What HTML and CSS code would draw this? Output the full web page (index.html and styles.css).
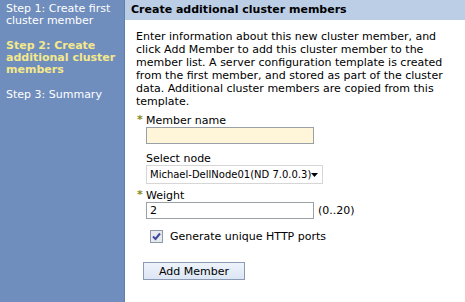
FILE: index.html
```html
<!DOCTYPE html>
<html>
<head>
<meta charset="utf-8">
<link rel="stylesheet" href="styles.css">
</head>
<body>
<div class="page">
  <nav class="steps">
    <div class="step">Step 1: Create first cluster member</div>
    <div class="step current">Step 2: Create additional cluster members</div>
    <div class="step">Step 3: Summary</div>
  </nav>
  <main class="main">
    <h1 class="title">Create additional cluster members</h1>
    <div class="content">
      <p class="intro">Enter information about this new cluster member, and click Add Member to add this cluster member to the member list. A server configuration template is created from the first member, and stored as part of the cluster data. Additional cluster members are copied from this template.</p>
      <div class="field">
        <label class="label req"><span class="star">*</span>Member name</label>
        <input class="text cream" type="text">
      </div>
      <div class="field field-select">
        <label class="label">Select node</label>
        <div class="select">
          <span class="opt">Michael-DellNode01(ND 7.0.0.3)</span>
          <svg class="arrow" width="7" height="4" viewBox="0 0 7 4"><path d="M0 0H7L3.5 4Z" fill="#000"/></svg>
        </div>
      </div>
      <div class="field">
        <label class="label req"><span class="star">*</span>Weight</label>
        <div class="row">
          <input class="text" type="text" value="2">
          <span class="range">(0..20)</span>
        </div>
      </div>
      <div class="check">
        <span class="box">
          <svg width="9" height="9" viewBox="0 0 9 9"><path d="M1 4.5L3.5 7L8 1.5" fill="none" stroke="#3d4aa0" stroke-width="2"/></svg>
        </span>
        <span>Generate unique HTTP ports</span>
      </div>
      <button class="btn" type="button">Add Member</button>
    </div>
  </main>
</div>
</body>
</html>
```

FILE: styles.css
```css
html, body {
  margin: 0;
  padding: 0;
  height: 100%;
}
body {
  font-family: "DejaVu Sans", Verdana, sans-serif;
  font-size: 11px;
  color: #000;
  background: #fff;
}
.page {
  display: flex;
  width: 465px;
  height: 302px;
  overflow: hidden;
}
.steps {
  width: 118px;
  flex: none;
  background: #6f8ebd;
  border-right: 1px solid #5f7fae;
  padding: 3px 0 0 6px;
  color: #fff;
  font-size: 11px;
  line-height: 12px;
}
.step {
  margin-bottom: 13px;
}
.step.current {
  color: #f4e88c;
  font-weight: bold;
}
.main {
  flex: 1;
  display: flex;
  flex-direction: column;
}
.title {
  margin: 0;
  background: #bccde6;
  font-size: 11px;
  font-weight: bold;
  height: 20px;
  line-height: 19px;
  padding-left: 6px;
  color: #000;
}
.content {
  padding: 10px 0 0 11px;
}
.intro {
  margin: 0 0 6px 0;
  line-height: 13px;
  width: 320px;
}
.field {
  margin-left: 10px;
  margin-bottom: 8px;
  display: flex;
  flex-direction: column;
}
.field-select {
  margin-bottom: 5px;
}
.label {
  display: block;
  line-height: 13px;
  position: relative;
}
.star {
  position: absolute;
  left: -9px;
  top: -1px;
  color: #8a8a1c;
  font-weight: bold;
}
.text {
  box-sizing: border-box;
  width: 168px;
  height: 17px;
  margin: 0;
  padding: 1px 3px;
  border: 1px solid #9aa0a8;
  font-family: "DejaVu Sans", Verdana, sans-serif;
  font-size: 11px;
  background: #fff;
}
.text.cream {
  background: #fff5d9;
}
.row {
  display: flex;
  align-items: center;
  gap: 4px;
}
.select {
  box-sizing: border-box;
  width: 177px;
  height: 19px;
  border: 1px solid #d6d6d6;
  display: flex;
  align-items: center;
  justify-content: space-between;
  padding: 0 4px 0 3px;
  font-size: 10px;
}
.opt {
  white-space: nowrap;
}
.arrow {
  display: block;
  flex: none;
}
.check {
  display: flex;
  align-items: center;
  gap: 7px;
  margin: 11px 0 0 14px;
  line-height: 13px;
}
.box {
  box-sizing: border-box;
  width: 13px;
  height: 13px;
  border: 1px solid #8d98a8;
  background: #e6e9ee;
  display: flex;
  align-items: center;
  justify-content: center;
}
.box svg {
  display: block;
}
.btn {
  display: block;
  margin: 19px 0 0 7px;
  width: 102px;
  height: 18px;
  padding: 0;
  border: 1px solid #8a9bb3;
  background: linear-gradient(#eef3fb, #dce6f4);
  font-family: "DejaVu Sans", Verdana, sans-serif;
  font-size: 11px;
  color: #000;
}
```
